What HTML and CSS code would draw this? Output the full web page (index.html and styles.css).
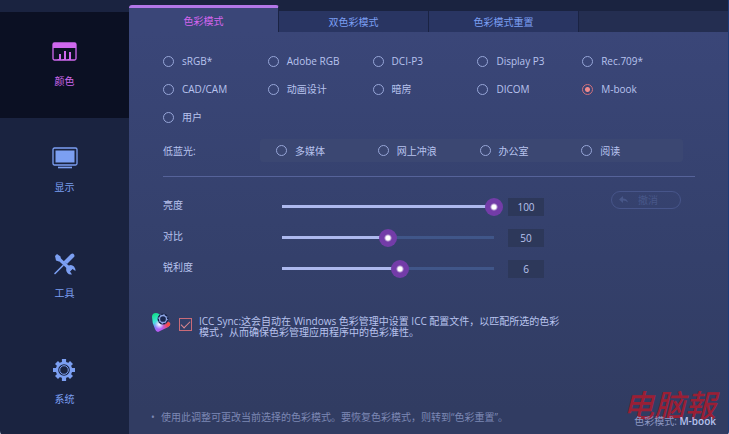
FILE: index.html
```html
<!DOCTYPE html>
<html lang="zh-CN">
<head>
    <meta charset="UTF-8">
    <meta name="viewport" content="width=device-width, initial-scale=1.0">
    <title>色彩模式</title>
    <link rel="stylesheet" href="styles.css">
</head>
<body>
    <div class="app">
        <nav class="sidebar">
            <a href="#color" class="nav-item active">
                <svg width="26" height="22" viewBox="0 0 26 22">
                    <rect x="1" y="2" width="23" height="17" rx="1.5" fill="none" stroke="currentColor" stroke-width="1.3"/>
                    <path d="M1 2h23v5H1z" fill="currentColor"/>
                    <path d="M8 19v-6M13 19v-9M18 19v-8" stroke="currentColor" stroke-width="2"/>
                    <path d="M5.500 18.500h3M10.500 18.500h3M15.500 18.500h3" stroke="currentColor"/>
                </svg>
                <span>颜色</span>
            </a>
            <a href="#display" class="nav-item">
                <svg width="26" height="22" viewBox="0 0 26 22">
                    <rect x="1" y="1" width="24" height="17" rx="1.5" fill="none" stroke="currentColor" stroke-width="1.3"/>
                    <rect x="3.500" y="3.500" width="19" height="12" fill="currentColor"/>
                    <path d="M6 20.500h14" stroke="currentColor" stroke-width="1.600"/>
                </svg>
                <span>显示</span>
            </a>
            <a href="#tools" class="nav-item">
                <svg width="26" height="22" viewBox="0 0 26 22">
                    <path d="M3 20.500L11 12.500" stroke="currentColor" stroke-width="1.600" stroke-linecap="round"/>
                    <path d="M11.500 8.500L19 1q2-1 3 .5t0 2.500l-7 7z" fill="currentColor"/>
                    <path d="M5.500 4.500L19 17" stroke="currentColor" stroke-width="3.200"/>
                    <path d="M3 3l2-2 3.500 2.500.5 3-2 2-3-1z" fill="currentColor"/>
                    <path d="M15 13.500q4-3 7 0 1.500 2 1.500 4.500l-3-2-2.500 2.500 2 3q-3 .5-4.500-1.500-2.500-3-.5-6.500z" fill="currentColor"/>
                </svg>
                <span>工具</span>
            </a>
            <a href="#system" class="nav-item">
                <svg width="26" height="22" viewBox="0 0 26 22">
                    <g stroke="currentColor" stroke-width="4.200">
                        <path d="M12 0v22M1 11h22M4.500 3.500l15 15M19.500 3.500l-15 15"/>
                    </g>
                    <circle cx="12" cy="11" r="8.300" fill="currentColor"/>
                    <circle cx="12" cy="11" r="5.800" fill="#1a2340"/>
                    <circle cx="12" cy="11" r="4.300" fill="none" stroke="currentColor" stroke-width="1"/>
                </svg>
                <span>系统</span>
            </a>
        </nav>

        <main class="main">
            <div class="tabs">
                <button type="button" class="tab active">色彩模式</button>
                <button type="button" class="tab">双色彩模式</button>
                <button type="button" class="tab">色彩模式重置</button>
            </div>

            <form class="panel">
                <div class="modes">
                    <label class="option"><input type="radio" name="mode">sRGB*</label>
                    <label class="option"><input type="radio" name="mode">Adobe RGB</label>
                    <label class="option"><input type="radio" name="mode">DCI-P3</label>
                    <label class="option"><input type="radio" name="mode">Display P3</label>
                    <label class="option"><input type="radio" name="mode">Rec.709*</label>
                    <label class="option"><input type="radio" name="mode">CAD/CAM</label>
                    <label class="option"><input type="radio" name="mode">动画设计</label>
                    <label class="option"><input type="radio" name="mode">暗房</label>
                    <label class="option"><input type="radio" name="mode">DICOM</label>
                    <label class="option"><input type="radio" name="mode" checked>M-book</label>
                    <label class="option"><input type="radio" name="mode">用户</label>
                </div>

                <div class="blue-light">
                    <span class="blue-label">低蓝光:</span>
                    <div class="blue-options">
                        <label class="option"><input type="radio" name="mode">多媒体</label>
                        <label class="option"><input type="radio" name="mode">网上冲浪</label>
                        <label class="option"><input type="radio" name="mode">办公室</label>
                        <label class="option"><input type="radio" name="mode">阅读</label>
                    </div>
                </div>

                <div class="adjust">
                    <div class="sliders">
                        <div class="slider-row">
                            <label for="brightness">亮度</label>
                            <input type="range" id="brightness" min="0" max="100" value="100" style="--fill: 1">
                            <output for="brightness">100</output>
                        </div>
                        <div class="slider-row">
                            <label for="contrast">对比</label>
                            <input type="range" id="contrast" min="0" max="100" value="50" style="--fill: 0.5">
                            <output for="contrast">50</output>
                        </div>
                        <div class="slider-row">
                            <label for="sharpness">锐利度</label>
                            <input type="range" id="sharpness" min="1" max="10" value="6" style="--fill: 0.556">
                            <output for="sharpness">6</output>
                        </div>
                    </div>
                    <button type="button" class="cancel" disabled>
                        <svg width="9" height="8" viewBox="0 0 9 8"><path d="M0 3.500L4 0v2.500q4 0 5 4Q7 4.500 4 4.500V7z" fill="currentColor"/></svg>
                        <span>撤消</span>
                    </button>
                </div>

                <div class="icc">
                    <svg width="22" height="22" viewBox="0 0 22 22">
                        <defs>
                            <linearGradient id="gamut" x1="0.2" y1="0" x2="0.7" y2="1">
                                <stop offset="0" stop-color="#12e08a"/>
                                <stop offset="0.350" stop-color="#3fe6d8"/>
                                <stop offset="0.600" stop-color="#8a7bff"/>
                                <stop offset="1" stop-color="#e040e8"/>
                            </linearGradient>
                            <radialGradient id="warm" cx="1" cy="0.600" r="0.500">
                                <stop offset="0" stop-color="#ff5a1f"/>
                                <stop offset="0.400" stop-color="#f04a60"/>
                                <stop offset="1" stop-color="#f04a90" stop-opacity="0"/>
                            </radialGradient>
                            <radialGradient id="white" cx="0.400" cy="0.600" r="0.250">
                                <stop offset="0" stop-color="#fff"/>
                                <stop offset="1" stop-color="#fff" stop-opacity="0"/>
                            </radialGradient>
                        </defs>
                        <path d="M1 4Q1 0 5 0q3 0 6 4l8 6q1 2-2 4L7 19q-2 0-3-3Q1 10 1 4z" fill="url(#gamut)"/>
                        <path d="M1 4Q1 0 5 0q3 0 6 4l8 6q1 2-2 4L7 19q-2 0-3-3Q1 10 1 4z" fill="url(#warm)"/>
                        <path d="M1 4Q1 0 5 0q3 0 6 4l8 6q1 2-2 4L7 19q-2 0-3-3Q1 10 1 4z" fill="url(#white)"/>
                        <circle cx="12" cy="6" r="5.500" fill="#111d40"/>
                        <circle cx="12" cy="6" r="3.500" fill="#1a2750" stroke="#8ea6e6" stroke-width="1.300"/>
                        <circle cx="12" cy="6" r="4.600" fill="none" stroke="#8ea6e6" stroke-dasharray="1.200 2.400"/>
                    </svg>
                    <input type="checkbox" id="iccSync" checked>
                    <label for="iccSync">ICC Sync:这会自动在 Windows 色彩管理中设置 ICC 配置文件，以匹配所选的色彩模式，从而确保色彩管理应用程序中的色彩准性。</label>
                </div>
            </form>

            <footer class="footer">
                <ul class="hint">
                    <li>使用此调整可更改当前选择的色彩模式。要恢复色彩模式，则转到“色彩重置”。</li>
                </ul>
                <div class="watermark">电脑報</div>
                <div class="current">色彩模式: <strong>M-book</strong></div>
            </footer>
        </main>
    </div>
</body>
</html>
```
FILE: styles.css
```css
* {
    margin: 0;
    padding: 0;
    box-sizing: border-box;
}
body {
    background: #c5d0e0;
    font-family: "Open Sans", "Noto Sans CJK SC", sans-serif;
    font-size: 10px;
    line-height: 14px;
    color: #b8c3ee;
}
button,
input {
    font: inherit;
    color: inherit;
}
.app {
    display: flex;
    min-height: 100vh;
    background: #1a2340;
    border-right: 1px solid #1c3c78;
    border-radius: 0 0 5px 5px;
    overflow: hidden;
}

/* sidebar */
.sidebar {
    width: 129px;
    padding-top: 12px;
    flex-shrink: 0;
}
.nav-item {
    display: flex;
    flex-direction: column;
    align-items: center;
    gap: 11px;
    height: 106px;
    padding-top: 29px;
    color: #7c9ff2;
    text-decoration: none;
}
.nav-item.active {
    background: #0b1023;
    color: #cf68ee;
}

/* tabs */
.main {
    flex: 1;
    min-width: 0;
    display: flex;
    flex-direction: column;
    padding-top: 5px;
}
.tabs {
    display: flex;
    align-items: flex-end;
    height: 27px;
    background: linear-gradient(#1a2340 6px, #242e51 6px);
}
.tab {
    width: 150px;
    height: 21px;
    border: none;
    border-right: 1px solid #1a2343;
    background: #293562;
    color: #7c9ff2;
    cursor: pointer;
}
.tab.active {
    height: 27px;
    border-top: 3px solid #b277e8;
    border-radius: 3px 3px 0 0;
    background: #3a4678;
    color: #d565ee;
    padding-top: 2px;
}

/* panel */
.panel {
    flex: 1;
    padding: 15px 33px 0 34px;
    background: linear-gradient(#3a4678, #34406b 60%, #313c62);
}
.modes {
    display: grid;
    grid-template-columns: repeat(5, 1fr);
    grid-auto-rows: 28px;
    padding-right: 8px;
}
.option {
    display: flex;
    align-items: center;
    gap: 8px;
}
.option input {
    appearance: none;
    width: 11px;
    height: 11px;
    border: 1px solid #97a6d8;
    border-radius: 50%;
}
.option input:checked {
    border-color: #d0707c;
    background: radial-gradient(circle, #f08a8c 2px, transparent 3px);
}
.blue-light {
    display: flex;
    align-items: center;
    margin-top: 8px;
    padding-bottom: 14px;
    border-bottom: 1px solid #56639a;
}
.blue-label {
    width: 97px;
}
.blue-options {
    flex: 1;
    display: grid;
    grid-template-columns: repeat(4, 1fr);
    height: 23px;
    margin-right: 12px;
    padding-left: 16px;
    border-radius: 3px;
    background: #3b4772;
}

/* sliders */
.adjust {
    display: flex;
    align-items: flex-start;
    padding: 14px 14px 0 0;
}
.sliders {
    flex: 1;
}
.slider-row {
    display: flex;
    align-items: center;
    height: 31px;
}
.slider-row label {
    width: 110px;
    padding-bottom: 3px;
}
.slider-row input {
    appearance: none;
    flex: 1;
    min-width: 0;
    height: 18px;
    margin-right: 5px;
    background:
        linear-gradient(#adb9ee, #adb9ee) 9px 50% / calc((100% - 18px) * var(--fill)) 3px no-repeat,
        linear-gradient(#405689, #405689) 9px 50% / calc(100% - 18px) 3px no-repeat;
}
.slider-row input::-webkit-slider-thumb {
    appearance: none;
    width: 18px;
    height: 18px;
    border-radius: 50%;
    background: radial-gradient(circle, #fff 2px, #733ca8 4px);
}
.slider-row output {
    width: 36px;
    height: 18px;
    line-height: 18px;
    text-align: center;
    background: #2d385a;
}
.cancel {
    display: flex;
    align-items: center;
    gap: 10px;
    width: 70px;
    height: 18px;
    margin-left: 67px;
    padding-left: 7px;
    border: 1px solid #47558a;
    border-radius: 9px;
    background: none;
    color: #485789;
}

/* icc sync */
.icc {
    display: flex;
    align-items: flex-start;
    margin: 29px 0 0 -12px;
}
.icc input {
    appearance: none;
    flex-shrink: 0;
    width: 13px;
    height: 13px;
    margin: 5px 7px 0 6px;
    border: 1px solid #c96b78;
    display: grid;
    place-items: center;
}
.icc input:checked::before {
    content: "";
    width: 8px;
    height: 4px;
    margin-bottom: 3px;
    border-left: 1px solid #e08a92;
    border-bottom: 1px solid #e08a92;
    rotate: -45deg;
}
.icc label {
    max-width: 364px;
    padding-top: 3px;
    line-height: 11px;
}

/* footer */
.footer {
    position: relative;
    display: flex;
    justify-content: space-between;
    align-items: flex-start;
    padding: 0 12px 8px 32px;
    background: #313c62;
}
.hint {
    list-style: none;
    color: #7d88b4;
}
.hint li::before {
    content: "•";
    display: inline-block;
    width: 10px;
    margin-left: -10px;
}
.current {
    position: relative;
    padding-top: 4px;
    color: #8d98c4;
}
.current strong {
    font-weight: 600;
    color: #b8c3ee;
}
.watermark {
    position: absolute;
    right: 12px;
    bottom: 14px;
    font-family: "Noto Sans CJK SC", sans-serif;
    font-size: 31px;
    font-style: italic;
    font-weight: 500;
    line-height: 36px;
    color: #9a1f35;
}
```
